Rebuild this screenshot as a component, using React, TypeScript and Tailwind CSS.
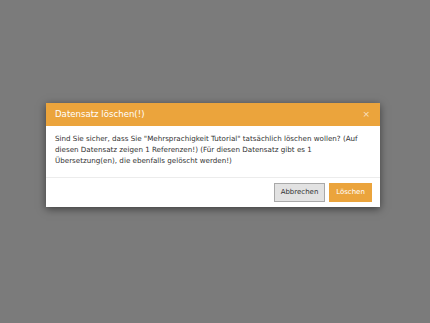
import React from "react";

export default function App() {
  return (
    <div
      className="w-[430px] h-[323px] bg-[#7b7b7b] pt-[103px] pl-[46px]"
      style={{ fontFamily: '"DejaVu Sans", Verdana, sans-serif' }}
    >
      <div className="w-[334px] bg-white shadow-[0_2px_8px_rgba(0,0,0,0.5)]">
        <div className="h-[23px] bg-[#eba43c] flex items-center justify-between pl-[9px] pr-[10px]">
          <span className="text-white text-[8.6px]">Datensatz löschen(!)</span>
          <span className="text-white/70 text-[9px] leading-none">×</span>
        </div>
        <div className="pt-[7px] pb-[11px] px-[9px] text-[7.15px] leading-[11px] text-[#333]">
          Sind Sie sicher, dass Sie "Mehrsprachigkeit Tutorial" tatsächlich löschen wollen? (Auf
          diesen Datensatz zeigen 1 Referenzen!) (Für diesen Datensatz gibt es 1 Übersetzung(en),
          die ebenfalls gelöscht werden!)
        </div>
        <div className="border-t border-[#ececec] flex justify-end gap-[4px] pt-[5px] pb-[5px] pr-[8px]">
          <button className="h-[19px] w-[51px] bg-[#e2e2e2] border border-[#a9a9a9] text-[7px] text-[#333]">
            Abbrechen
          </button>
          <button className="h-[19px] w-[43px] bg-[#eba43c] text-[7px] text-white">
            Löschen
          </button>
        </div>
      </div>
    </div>
  );
}
